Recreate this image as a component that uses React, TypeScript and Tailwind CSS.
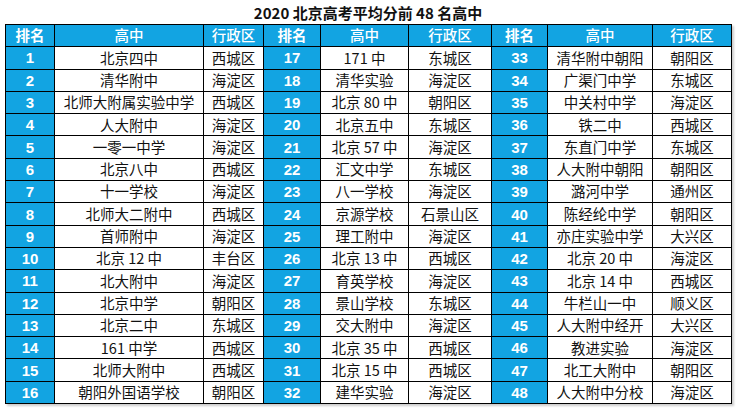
import React from "react";

type Row = [number, string, string];

const groups: Row[][] = [
  [
    [1, "北京四中", "西城区"],
    [2, "清华附中", "海淀区"],
    [3, "北师大附属实验中学", "西城区"],
    [4, "人大附中", "海淀区"],
    [5, "一零一中学", "海淀区"],
    [6, "北京八中", "西城区"],
    [7, "十一学校", "海淀区"],
    [8, "北师大二附中", "西城区"],
    [9, "首师附中", "海淀区"],
    [10, "北京 12 中", "丰台区"],
    [11, "北大附中", "海淀区"],
    [12, "北京中学", "朝阳区"],
    [13, "北京二中", "东城区"],
    [14, "161 中学", "西城区"],
    [15, "北师大附中", "西城区"],
    [16, "朝阳外国语学校", "朝阳区"],
  ],
  [
    [17, "171 中", "东城区"],
    [18, "清华实验", "海淀区"],
    [19, "北京 80 中", "朝阳区"],
    [20, "北京五中", "东城区"],
    [21, "北京 57 中", "海淀区"],
    [22, "汇文中学", "东城区"],
    [23, "八一学校", "海淀区"],
    [24, "京源学校", "石景山区"],
    [25, "理工附中", "海淀区"],
    [26, "北京 13 中", "西城区"],
    [27, "育英学校", "海淀区"],
    [28, "景山学校", "东城区"],
    [29, "交大附中", "海淀区"],
    [30, "北京 35 中", "西城区"],
    [31, "北京 15 中", "西城区"],
    [32, "建华实验", "海淀区"],
  ],
  [
    [33, "清华附中朝阳", "朝阳区"],
    [34, "广渠门中学", "东城区"],
    [35, "中关村中学", "海淀区"],
    [36, "铁二中", "西城区"],
    [37, "东直门中学", "东城区"],
    [38, "人大附中朝阳", "朝阳区"],
    [39, "潞河中学", "通州区"],
    [40, "陈经纶中学", "朝阳区"],
    [41, "亦庄实验中学", "大兴区"],
    [42, "北京 20 中", "海淀区"],
    [43, "北京 14 中", "西城区"],
    [44, "牛栏山一中", "顺义区"],
    [45, "人大附中经开", "大兴区"],
    [46, "教进实验", "海淀区"],
    [47, "北工大附中", "朝阳区"],
    [48, "人大附中分校", "海淀区"],
  ],
];

const widths = [
  "w-[49px]",
  "w-[149px]",
  "w-[60px]",
  "w-[57px]",
  "w-[88px]",
  "w-[83px]",
  "w-[56px]",
  "w-[105px]",
  "w-[79px]",
];

export default function App() {
  return (
    <div className="w-[736px] h-[408px] bg-white overflow-hidden font-['Noto_Sans_CJK_SC',sans-serif] text-[#111]">
      {/* Title */}
      <div className="h-[24px] flex items-center justify-center text-[15px] font-bold leading-none pt-[1px]">
        2020 北京高考平均分前 48 名高中
      </div>

      <table className="ml-[5px] table-fixed border-collapse w-[726px] border border-black shadow-[2px_2px_2px_rgba(0,0,0,0.2)]">
        <colgroup>
          {widths.map((w, i) => (
            <col key={i} className={w} />
          ))}
        </colgroup>
        <thead>
          <tr className="h-[22.3px] bg-[#12a4e2] text-white text-[14.5px] leading-none">
            {groups.map((_, g) => (
              <React.Fragment key={g}>
                <th className="border border-black p-0 font-bold">排名</th>
                <th className="border border-black p-0 font-medium">高中</th>
                <th className="border border-black p-0 font-medium">行政区</th>
              </React.Fragment>
            ))}
          </tr>
        </thead>
        <tbody>
          {groups[0].map((_, r) => (
            <tr key={r} className="h-[22.3px] leading-none">
              {groups.map((grp, g) => {
                const [rank, school, district] = grp[r];
                return (
                  <React.Fragment key={g}>
                    <td className="border border-black p-0 text-center bg-[#12a4e2] text-white font-bold text-[15px] font-['Liberation_Sans','Noto_Sans_CJK_SC',sans-serif]">
                      {rank}
                    </td>
                    <td className="border border-black p-0 text-center text-[14.5px] whitespace-nowrap">
                      {school}
                    </td>
                    <td className="border border-black p-0 text-center text-[14.5px] whitespace-nowrap">
                      {district}
                    </td>
                  </React.Fragment>
                );
              })}
            </tr>
          ))}
        </tbody>
      </table>
    </div>
  );
}
